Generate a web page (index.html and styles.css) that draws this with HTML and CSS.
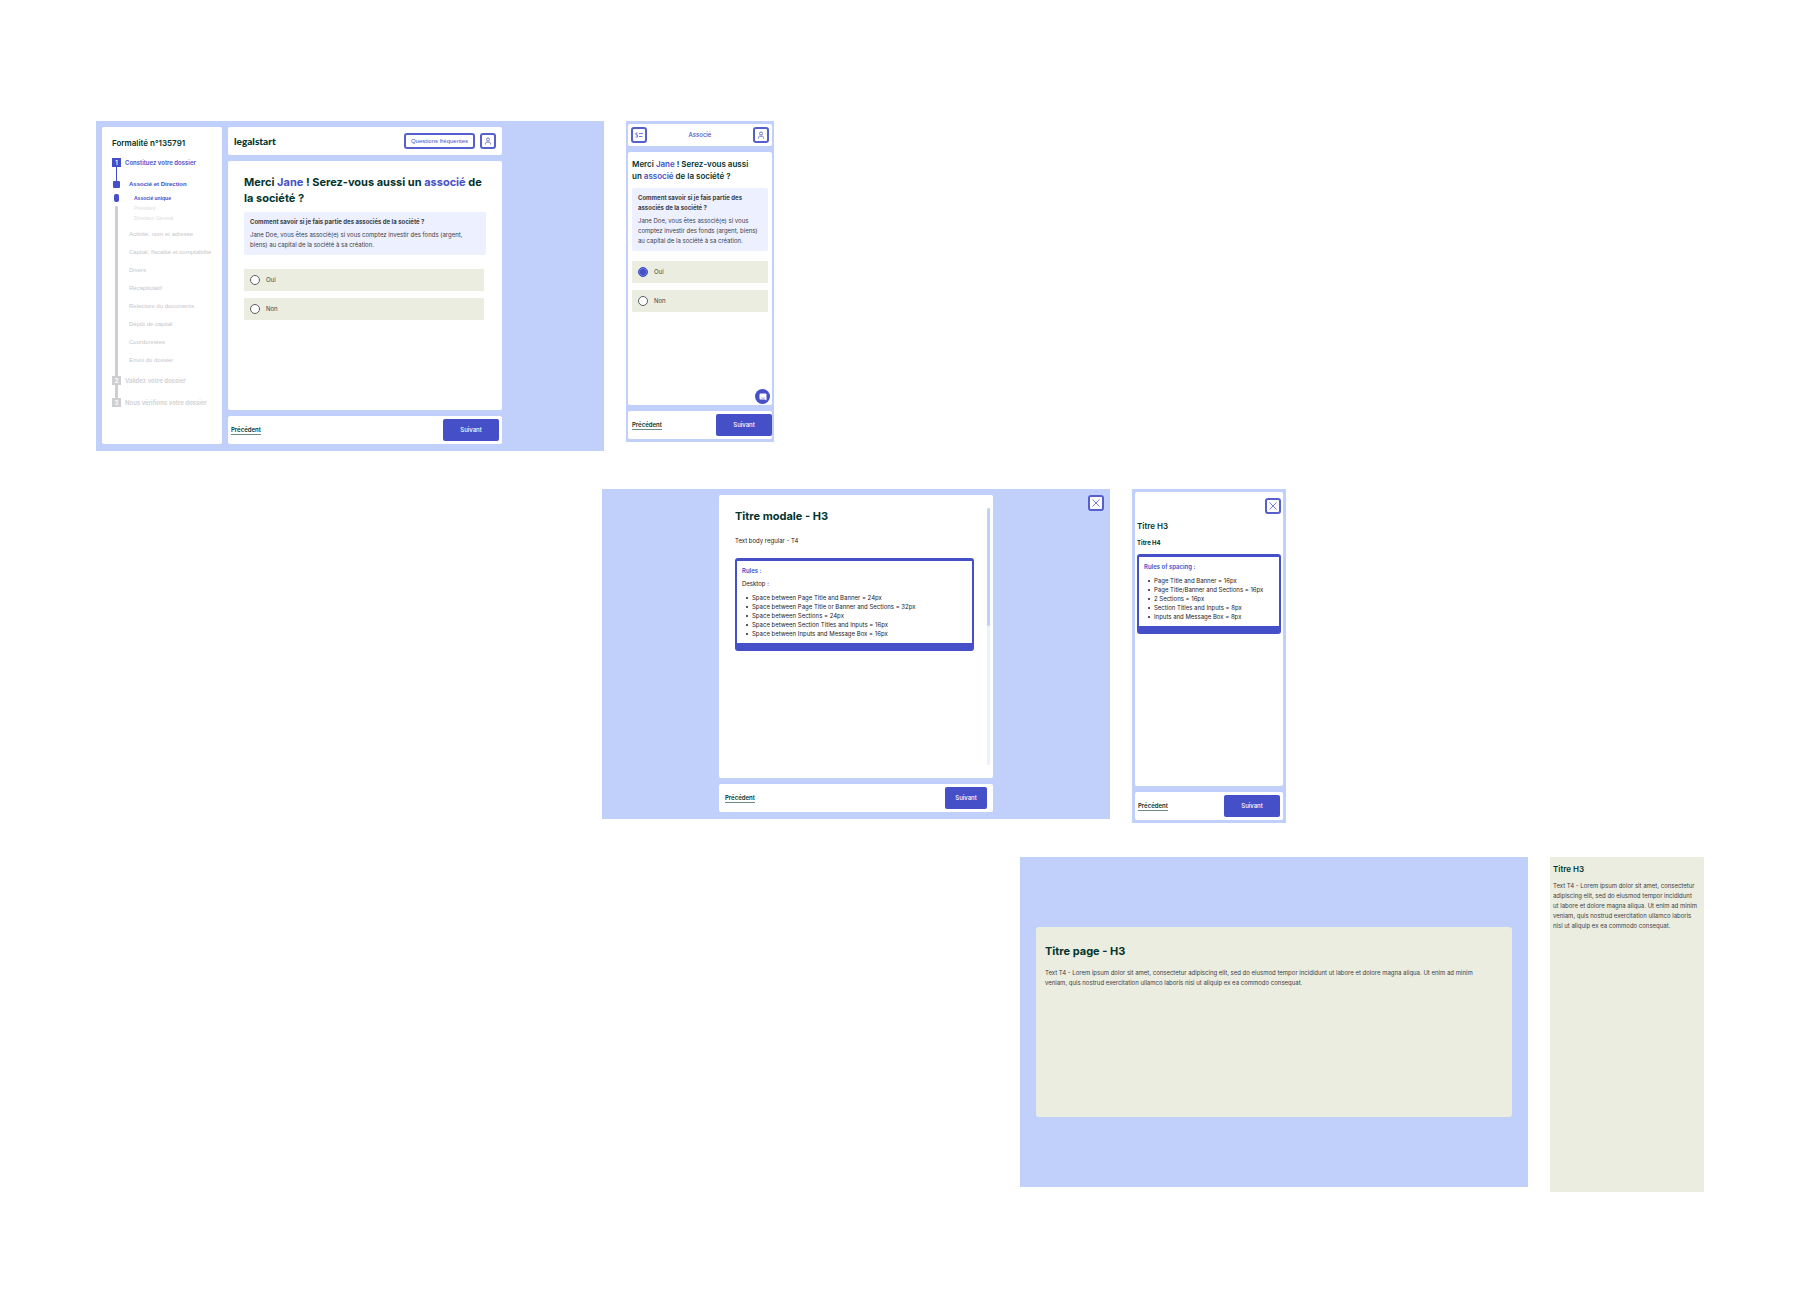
FILE: index.html
```html
<!DOCTYPE html>
<html lang="fr">
<head>
    <meta charset="UTF-8">
    <meta name="viewport" content="width=device-width, initial-scale=1.0">
    <title>Legalstart - Gabarits de page</title>
    <link rel="stylesheet" href="styles.css">
</head>
<body>
    <!-- Shared icons -->
    <svg class="sprite" aria-hidden="true">
        <symbol id="icon-user" viewBox="0 0 16 16">
            <circle cx="8" cy="5" r="3"/>
            <path d="M3 15v-2c0-2 2-3 3-3l2 1 2-1c1 0 3 1 3 3v2"/>
        </symbol>
        <symbol id="icon-steps" viewBox="0 0 16 16">
            <path d="M5 4H2v4h3v4H1M8 5h8M8 11h7"/>
        </symbol>
        <symbol id="icon-close" viewBox="0 0 16 16">
            <path d="M1 1l14 14M15 1L1 15"/>
        </symbol>
    </svg>

    <main class="board">
        <!-- Questionnaire -->
        <section class="row row-form">
            <div class="frame desktop form-desktop">
                <nav class="panel sidebar">
                    <h2 class="sidebar-title">Formalité n°135791</h2>
                    <div class="step active"><span class="step-number">1</span>Constituez votre dossier</div>
                    <div class="step-group">
                        <div class="rail">
                            <span class="rail-thin"></span>
                            <span class="rail-square"></span>
                            <span class="rail-pill"></span>
                            <span class="rail-line"></span>
                        </div>
                        <ul class="step-list">
                            <li class="current">Associé et Direction
                                <ul class="substep-list">
                                    <li class="current">Associé unique</li>
                                    <li>Président</li>
                                    <li>Directeur Général</li>
                                </ul>
                            </li>
                            <li>Activité, nom et adresse</li>
                            <li>Capital, fiscalité et comptabilité</li>
                            <li>Divers</li>
                            <li>Récapitulatif</li>
                            <li>Relecture du documents</li>
                            <li>Dépôt de capital</li>
                            <li>Coordonnées</li>
                            <li>Envoi du dossier</li>
                        </ul>
                    </div>
                    <div class="step"><span class="step-number">2</span>Validez votre dossier</div>
                    <div class="step-link"></div>
                    <div class="step"><span class="step-number">3</span>Nous vérifions votre dossier</div>
                </nav>

                <div class="column">
                    <header class="panel topbar">
                        <a href="#" class="logo">legalstart</a>
                        <button class="btn-outline">Questions fréquentes</button>
                        <button class="btn-icon" aria-label="Mon compte"><svg><use href="#icon-user"/></svg></button>
                    </header>
                    <div class="panel content">
                        <h1 class="title">Merci <em>Jane</em> ! Serez-vous aussi un <em>associé</em> de la société ?</h1>
                        <div class="info">
                            <strong>Comment savoir si je fais partie des associés de la société ?</strong>
                            <p>Jane Doe, vous êtes associé(e) si vous comptez investir des fonds (argent, biens) au capital de la société à sa création.</p>
                        </div>
                        <div class="options">
                            <label class="option"><input type="radio" name="associe-desktop">Oui</label>
                            <label class="option"><input type="radio" name="associe-desktop">Non</label>
                        </div>
                    </div>
                    <footer class="panel actions">
                        <a href="#" class="previous">Précédent</a>
                        <button class="btn-primary">Suivant</button>
                    </footer>
                </div>
            </div>

            <div class="frame mobile form-mobile">
                <header class="panel topbar">
                    <button class="btn-icon" aria-label="Étapes"><svg><use href="#icon-steps"/></svg></button>
                    <span class="topbar-title">Associé</span>
                    <button class="btn-icon" aria-label="Mon compte"><svg><use href="#icon-user"/></svg></button>
                </header>
                <div class="panel content">
                    <h1 class="title-small">Merci <em>Jane</em> ! Serez-vous aussi un <em>associé</em> de la société ?</h1>
                    <div class="info">
                        <strong>Comment savoir si je fais partie des associés de la société ?</strong>
                        <p>Jane Doe, vous êtes associé(e) si vous comptez investir des fonds (argent, biens) au capital de la société à sa création.</p>
                    </div>
                    <div class="options">
                        <label class="option"><input type="radio" name="associe-mobile" checked>Oui</label>
                        <label class="option"><input type="radio" name="associe-mobile">Non</label>
                    </div>
                    <button class="chat" aria-label="Chat">
                        <svg viewBox="0 0 16 16"><path class="bubble" d="M3 1h10a2 2 0 0 1 2 2v12l-3-2H3a2 2 0 0 1-2-2V3a2 2 0 0 1 2-2z"/><path class="smile" d="M4 9c2 2 6 2 8 0"/></svg>
                    </button>
                </div>
                <footer class="panel actions">
                    <a href="#" class="previous">Précédent</a>
                    <button class="btn-primary">Suivant</button>
                </footer>
            </div>
        </section>

        <!-- Modale -->
        <section class="row row-modal">
            <div class="frame desktop modal-desktop">
                <div class="column">
                    <div class="panel content">
                        <h2 class="title">Titre modale - H3</h2>
                        <p class="lead">Text body regular - T4</p>
                        <div class="rules">
                            <h3>Rules :</h3>
                            <p>Desktop :</p>
                            <ul>
                                <li>Space between Page Title and Banner = 24px</li>
                                <li>Space between Page Title or Banner and Sections = 32px</li>
                                <li>Space between Sections = 24px</li>
                                <li>Space between Section Titles and Inputs = 16px</li>
                                <li>Space between Inputs and Message Box = 16px</li>
                            </ul>
                        </div>
                        <div class="scrollbar"><div class="scrollbar-thumb"></div></div>
                    </div>
                    <footer class="panel actions">
                        <a href="#" class="previous">Précédent</a>
                        <button class="btn-primary">Suivant</button>
                    </footer>
                </div>
                <button class="btn-icon close" aria-label="Fermer"><svg><use href="#icon-close"/></svg></button>
            </div>

            <div class="frame mobile modal-mobile">
                <div class="panel content">
                    <button class="btn-icon close" aria-label="Fermer"><svg><use href="#icon-close"/></svg></button>
                    <h2 class="title-small">Titre H3</h2>
                    <h3 class="subtitle">Titre H4</h3>
                    <div class="rules">
                        <h3>Rules of spacing :</h3>
                        <ul>
                            <li>Page Title and Banner = 16px</li>
                            <li>Page Title/Banner and Sections = 16px</li>
                            <li>2 Sections = 16px</li>
                            <li>Section Titles and Inputs = 8px</li>
                            <li>Inputs and Message Box = 8px</li>
                        </ul>
                    </div>
                </div>
                <footer class="panel actions">
                    <a href="#" class="previous">Précédent</a>
                    <button class="btn-primary">Suivant</button>
                </footer>
            </div>
        </section>

        <!-- Page simple -->
        <section class="row row-page">
            <div class="frame desktop page-desktop">
                <article class="card">
                    <h2 class="title">Titre page - H3</h2>
                    <p>Text T4 - Lorem ipsum dolor sit amet, consectetur adipiscing elit, sed do eiusmod tempor incididunt ut labore et dolore magna aliqua. Ut enim ad minim veniam, quis nostrud exercitation ullamco laboris nisi ut aliquip ex ea commodo consequat.</p>
                </article>
            </div>

            <article class="page-mobile">
                <h2 class="title-small">Titre H3</h2>
                <p>Text T4 - Lorem ipsum dolor sit amet, consectetur adipiscing elit, sed do eiusmod tempor incididunt<br>ut labore et dolore magna aliqua. Ut enim ad minim veniam, quis nostrud exercitation ullamco laboris nisi ut aliquip ex ea commodo consequat.</p>
            </article>
        </section>
    </main>
</body>
</html>
```
FILE: styles.css
```css
* {
    box-sizing: border-box;
}

body {
    margin: 0;
    background: #ffffff;
    font-family: 'Inter', 'Liberation Sans', sans-serif;
    font-size: 6px;
    line-height: 10px;
    color: #3c4046;
}

h1, h2, h3, p, ul {
    margin: 0;
    padding: 0;
}

ul {
    list-style: none;
}

em {
    font-style: normal;
    color: #444fc8;
}

button {
    font-family: inherit;
    font-size: 6px;
    line-height: 10px;
    padding: 0;
    cursor: pointer;
}

.sprite {
    display: none;
}

/* Board */
.board {
    padding: 121px 96px;
    display: grid;
    grid-auto-rows: minmax(368px, auto);
}

.row {
    display: grid;
    column-gap: 22px;
    align-items: start;
}

.row-form {
    grid-template-columns: 508fr 148fr 908fr;
}

.row-modal {
    grid-template-columns: 484fr 508fr 154fr 396fr;
}

.row-page {
    grid-template-columns: 902fr 508fr 154fr;
}

.row-modal .desktop,
.row-page .desktop {
    grid-column: 2;
}

.frame {
    background: #c0d0fb;
}

.desktop {
    min-height: 330px;
    padding: 6px 6px 7px;
}

.mobile {
    display: flex;
    flex-direction: column;
    gap: 6px;
    padding: 3px;
}

.panel {
    background: #ffffff;
    border-radius: 2px;
}

.column {
    display: flex;
    flex-direction: column;
    gap: 6px;
}

.content {
    position: relative;
    flex: 1;
}

/* Text */
.title {
    font-size: 11px;
    line-height: 16px;
    font-weight: 700;
    color: #04342c;
}

.title-small {
    font-size: 8px;
    line-height: 12px;
    font-weight: 600;
    color: #04342c;
}

.subtitle {
    font-size: 6px;
    line-height: 10px;
    font-weight: 700;
    color: #04342c;
}

/* Buttons */
.btn-primary {
    width: 56px;
    height: 22px;
    border: none;
    border-radius: 2px;
    background: #444fc8;
    color: #ffffff;
    font-weight: 500;
}

.btn-outline,
.btn-icon {
    height: 16px;
    border: 2px solid #5560cd;
    border-radius: 3px;
    background: #ffffff;
    color: #444fc8;
}

.btn-outline {
    padding: 0 5px;
    font-family: 'Liberation Sans', sans-serif;
}

.btn-icon {
    width: 16px;
    display: flex;
    align-items: center;
    justify-content: center;
}

.btn-icon svg {
    width: 8px;
    height: 8px;
    fill: none;
    stroke: #444fc8;
    stroke-width: 1.5;
}

.actions {
    display: flex;
    align-items: center;
    justify-content: space-between;
    padding: 3px;
}

.previous {
    color: #04342c;
    font-weight: 600;
    text-decoration: none;
    line-height: 8px;
    border-bottom: 1px solid #6d8a84;
}

.topbar {
    display: flex;
    align-items: center;
    gap: 5px;
    padding: 6px;
}

/* Sidebar */
.form-desktop {
    display: grid;
    grid-template-columns: 120fr 274fr 90fr;
    column-gap: 6px;
}

.sidebar {
    padding: 10px 0 10px 10px;
}

.sidebar-title {
    font-size: 8px;
    line-height: 12px;
    font-weight: 600;
    color: #04342c;
    margin-bottom: 9px;
}

.step {
    display: flex;
    align-items: center;
    gap: 4px;
    height: 9px;
    font-weight: 600;
    color: #cfcfd1;
}

.step.active {
    color: #444fc8;
}

.step-number {
    width: 9px;
    height: 9px;
    line-height: 9px;
    text-align: center;
    background: currentColor;
}

.step-number::first-letter {
    color: #ffffff;
}

.step-group {
    display: flex;
    gap: 8px;
}

.rail {
    width: 9px;
    display: flex;
    flex-direction: column;
    align-items: center;
}

.rail-thin {
    width: 1px;
    height: 14px;
    background: #444fc8;
}

.rail-square {
    width: 7px;
    height: 7px;
    border-radius: 1px;
    background: #444fc8;
}

.rail-pill {
    width: 5px;
    height: 8px;
    margin: 6px 0 4px;
    border-radius: 2px;
    background: #444fc8;
}

.rail-line,
.step-link {
    width: 3px;
    background: #cfcfd1;
}

.rail-line {
    flex: 1;
    border-radius: 1px 1px 0 0;
}

.step-link {
    height: 13px;
    margin-left: 3px;
}

.step-list {
    padding: 8px 0 7px;
    font-family: 'Liberation Sans', sans-serif;
    white-space: nowrap;
}

.step-list > li {
    line-height: 18px;
    color: #c6c6c9;
}

.step-list > .current {
    color: #444fc8;
    font-weight: 700;
}

.substep-list {
    padding: 0 0 2px 5px;
    font-size: 5px;
}

.substep-list li {
    line-height: 10px;
    font-weight: 400;
    color: #dcdcde;
}

.substep-list .current {
    color: #444fc8;
    font-weight: 700;
}

/* Form, desktop */
.logo {
    margin-right: auto;
    font-family: 'Lato Black', 'Lato', sans-serif;
    font-size: 10px;
    line-height: 12px;
    font-weight: 900;
    color: #04342c;
    text-decoration: none;
}

.form-desktop .content {
    padding: 13px 10px 16px 16px;
}

.form-desktop .info {
    margin-right: 6px;
}

.form-desktop .options {
    margin-top: 14px;
    margin-right: 8px;
}

.info {
    margin-top: 6px;
    padding: 5px 6px;
    border-radius: 2px;
    background: #ecf0ff;
}

.info strong {
    display: block;
    font-weight: 700;
}

.info p {
    margin-top: 3px;
}

.options {
    display: grid;
    gap: 7px;
    margin-top: 10px;
}

.option {
    display: flex;
    align-items: center;
    gap: 6px;
    height: 22px;
    padding: 0 6px;
    border-radius: 1px;
    background: #eaede0;
}

.option input {
    appearance: none;
    width: 10px;
    height: 10px;
    margin: 0;
    border: 1px solid #5c5f63;
    border-radius: 50%;
    background: #ffffff;
}

.option input:checked {
    border-color: #444fc8;
    background: #444fc8;
    box-shadow: inset 0 0 0 1px #6f79da;
}

/* Form, mobile */
.form-mobile {
    min-height: 321px;
    padding: 3px 2px;
}

.form-mobile .topbar {
    justify-content: space-between;
    padding: 3px;
}

.topbar-title {
    color: #444fc8;
    font-weight: 500;
}

.form-mobile .content {
    padding: 6px 4px;
}

.form-mobile .title-small {
    padding-right: 16px;
}

.form-mobile .actions {
    padding: 3px 0 3px 4px;
}

.chat {
    position: absolute;
    right: 2px;
    bottom: 1px;
    width: 15px;
    height: 15px;
    display: flex;
    align-items: center;
    justify-content: center;
    border: none;
    border-radius: 50%;
    background: #444fc8;
}

.chat svg {
    width: 8px;
    height: 8px;
}

.bubble {
    fill: #ffffff;
}

.smile {
    fill: none;
    stroke: #444fc8;
    stroke-width: 1;
}

/* Modal, desktop */
.modal-desktop {
    display: grid;
    grid-template-columns: 111fr 274fr 111fr;
}

.modal-desktop .column {
    grid-column: 2;
}

.modal-desktop .close {
    justify-self: end;
}

.modal-desktop .content {
    padding: 13px 19px 16px 16px;
}

.lead {
    margin: 12px 0;
    color: #1e2024;
}

.rules {
    padding: 5px;
    border: solid #444fc8;
    border-width: 3px 2px 8px;
    border-radius: 3px;
    color: #1e2024;
}

.rules h3 {
    font-size: 6px;
    line-height: 10px;
    font-weight: 600;
    color: #444fc8;
}

.rules p {
    margin-top: 3px;
}

.rules ul {
    margin-top: 4px;
    padding-left: 4px;
}

.rules li {
    display: flex;
    align-items: center;
    gap: 4px;
    line-height: 9px;
}

.rules li::before {
    content: "";
    width: 2px;
    height: 2px;
    border-radius: 1px;
    background: #1e2024;
}

.scrollbar {
    position: absolute;
    top: 13px;
    right: 3px;
    bottom: 13px;
    width: 3px;
    border-radius: 2px;
    background: #ecf0ff;
}

.scrollbar-thumb {
    height: 46%;
    border-radius: 2px;
    background: #c0d0fb;
}

.modal-desktop .actions {
    padding: 3px 6px;
}

.modal-desktop .btn-primary {
    width: 42px;
}

/* Modal, mobile */
.modal-mobile {
    min-height: 334px;
}

.modal-mobile .content {
    padding: 6px 2px;
}

.modal-mobile .close {
    margin-left: auto;
}

.modal-mobile .title-small {
    margin: 6px 0;
}

.modal-mobile .subtitle {
    margin-bottom: 6px;
}

/* Simple page */
.page-desktop {
    display: grid;
    align-items: center;
    padding: 0 16px;
}

.card {
    min-height: 190px;
    padding: 16px 9px;
    border-radius: 3px;
    background: #eaede0;
}

.card p {
    margin-top: 9px;
    padding-right: 20px;
}

.page-mobile {
    min-height: 335px;
    padding: 6px 3px;
    background: #eaede0;
}

.page-mobile p {
    margin-top: 6px;
}
```
